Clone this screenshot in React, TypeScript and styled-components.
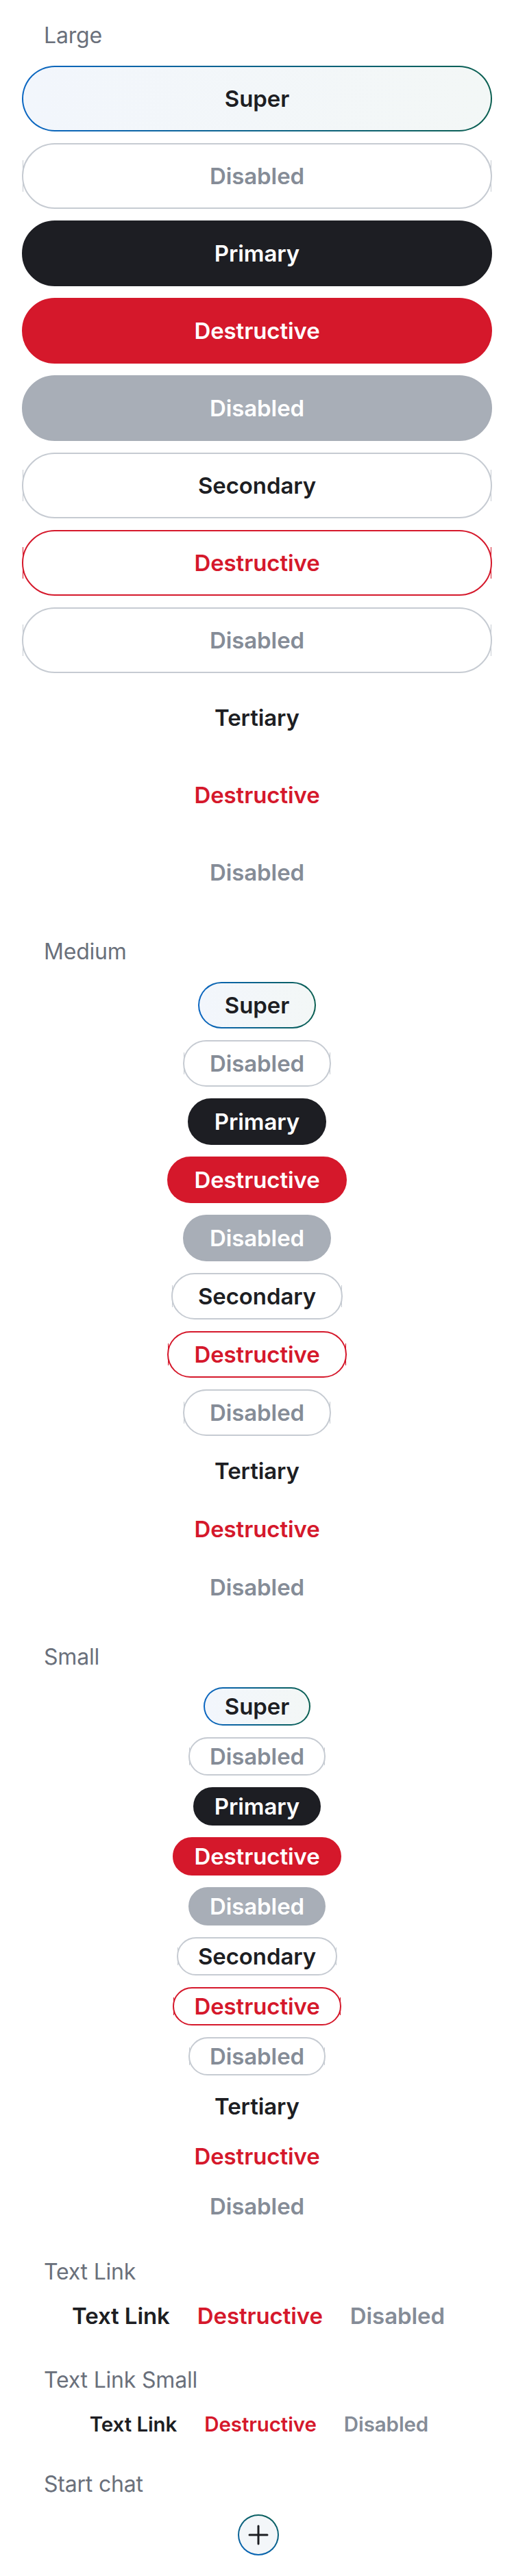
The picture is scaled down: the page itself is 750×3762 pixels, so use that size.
import React from "react";
import styled, { createGlobalStyle, css } from "styled-components";

const INK = "#1d1e23";
const RED = "#d5182b";
const GRAY_TEXT = "#858c97";
const DISABLED_BG = "#a8aeb7";
const BORDER_GRAY = "#c6cbd2";
const LABEL = "#6a707b";
const BLUE = "#0a66c2";
const TEAL = "#0b5f51";

const GlobalStyle = createGlobalStyle`
  html, body { margin: 0; padding: 0; background: #ffffff; }
  body {
    font-family: Inter, "Noto Sans", "Liberation Sans", sans-serif;
    -webkit-font-smoothing: antialiased;
  }
  * { box-sizing: border-box; }
`;

type Variant =
  | "super"
  | "outlineDisabled"
  | "primary"
  | "destructive"
  | "filledDisabled"
  | "secondary"
  | "destructiveOutline"
  | "tertiary"
  | "tertiaryDestructive"
  | "tertiaryDisabled";

type Size = "large" | "medium" | "small";

const Page = styled.main`
  display: flex;
  flex-direction: column;
  padding: 32px 32px 30px;
`;

const Section = styled.section<{ $space: number }>`
  display: flex;
  flex-direction: column;
  margin-top: ${(p) => p.$space}px;
`;

const SectionLabel = styled.h2`
  margin: 0 0 24px;
  padding-left: 32px;
  font-size: 32px;
  line-height: 40px;
  font-weight: 400;
  color: ${LABEL};
  letter-spacing: -0.2px;
`;

const Stack = styled.div<{ $size: Size }>`
  display: flex;
  flex-direction: column;
  align-items: ${(p) => (p.$size === "large" ? "stretch" : "center")};
  gap: 17px;
`;

const sizeStyles: Record<Size, ReturnType<typeof css>> = {
  large: css`
    height: 96px;
    padding: 0 30px;
  `,
  medium: css`
    height: 68px;
    padding: 0 37px;
  `,
  small: css`
    height: 56px;
    padding: 0 29px;
  `,
};

const edgeTicks = (color: string) => css`
  &::before,
  &::after {
    content: "";
    position: absolute;
    top: 25%;
    height: 50%;
    width: 1px;
    background: ${color};
  }
  &::before {
    left: -1px;
  }
  &::after {
    right: -1px;
  }
`;

const variantStyles: Record<Variant, ReturnType<typeof css>> = {
  super: css`
    color: ${INK};
    border: 2px solid transparent;
    background: linear-gradient(90deg, #f2f6fc, #f3f7f6) padding-box,
      linear-gradient(90deg, ${BLUE}, ${TEAL}) border-box;
  `,
  outlineDisabled: css`
    color: ${GRAY_TEXT};
    background: #ffffff;
    border: 2px solid ${BORDER_GRAY};
    ${edgeTicks(BORDER_GRAY)}
  `,
  primary: css`
    color: #ffffff;
    background: ${INK};
    border: 2px solid ${INK};
  `,
  destructive: css`
    color: #ffffff;
    background: ${RED};
    border: 2px solid ${RED};
  `,
  filledDisabled: css`
    color: #ffffff;
    background: ${DISABLED_BG};
    border: 2px solid ${DISABLED_BG};
  `,
  secondary: css`
    color: ${INK};
    background: #ffffff;
    border: 2px solid ${BORDER_GRAY};
    ${edgeTicks(BORDER_GRAY)}
  `,
  destructiveOutline: css`
    color: ${RED};
    background: #ffffff;
    border: 2px solid ${RED};
    ${edgeTicks(RED)}
  `,
  tertiary: css`
    color: ${INK};
    background: transparent;
    border: 2px solid transparent;
  `,
  tertiaryDestructive: css`
    color: ${RED};
    background: transparent;
    border: 2px solid transparent;
  `,
  tertiaryDisabled: css`
    color: ${GRAY_TEXT};
    background: transparent;
    border: 2px solid transparent;
  `,
};

const Button = styled.button<{ $variant: Variant; $size: Size }>`
  position: relative;
  display: flex;
  align-items: center;
  justify-content: center;
  border-radius: 999px;
  font-family: Inter, "Noto Sans", sans-serif;
  font-size: 33px;
  font-weight: 600;
  letter-spacing: -0.1px;
  cursor: pointer;
  ${(p) => sizeStyles[p.$size]}
  ${(p) => variantStyles[p.$variant]}
`;

const LinkRow = styled.div<{ $small?: boolean }>`
  display: flex;
  justify-content: center;
  align-items: center;
  gap: 40px;
  height: 40px;
  padding-left: ${(p) => (p.$small ? "6px" : "4px")};
`;

const TextLink = styled.a<{ $tone: "ink" | "red" | "gray"; $small?: boolean }>`
  font-size: ${(p) => (p.$small ? "29.5px" : "33px")};
  font-weight: 600;
  letter-spacing: -0.1px;
  text-decoration: none;
  cursor: pointer;
  color: ${(p) => (p.$tone === "ink" ? INK : p.$tone === "red" ? RED : GRAY_TEXT)};
`;

const ChatRow = styled.div`
  display: flex;
  justify-content: center;
  padding-left: 4px;
`;

const ChatButton = styled.button`
  width: 60px;
  height: 60px;
  border-radius: 50%;
  display: flex;
  align-items: center;
  justify-content: center;
  padding: 0;
  border: 2px solid transparent;
  background: linear-gradient(#f3f6f9, #f3f6f9) padding-box,
    linear-gradient(20deg, ${BLUE}, ${TEAL}) border-box;
  cursor: pointer;
`;

const ITEMS: { variant: Variant; text: string }[] = [
  { variant: "super", text: "Super" },
  { variant: "outlineDisabled", text: "Disabled" },
  { variant: "primary", text: "Primary" },
  { variant: "destructive", text: "Destructive" },
  { variant: "filledDisabled", text: "Disabled" },
  { variant: "secondary", text: "Secondary" },
  { variant: "destructiveOutline", text: "Destructive" },
  { variant: "outlineDisabled", text: "Disabled" },
  { variant: "tertiary", text: "Tertiary" },
  { variant: "tertiaryDestructive", text: "Destructive" },
  { variant: "tertiaryDisabled", text: "Disabled" },
];

const SIZES: { size: Size; label: string; space: number }[] = [
  { size: "large", label: "Large", space: 0 },
  { size: "medium", label: "Medium", space: 48 },
  { size: "small", label: "Small", space: 48 },
];

const PlusIcon = () => (
  <svg width="30" height="30" viewBox="0 0 30 30" aria-hidden="true">
    <path d="M15 2v26M2 15h26" stroke={INK} strokeWidth="3" strokeLinecap="round" fill="none" />
  </svg>
);

export default function App() {
  return (
    <>
      <GlobalStyle />
      <Page>
        {SIZES.map((s) => (
          <Section key={s.size} $space={s.space}>
            <SectionLabel>{s.label}</SectionLabel>
            <Stack $size={s.size}>
              {ITEMS.map((it, i) => (
                <Button key={i} $variant={it.variant} $size={s.size}>
                  {it.text}
                </Button>
              ))}
            </Stack>
          </Section>
        ))}
        <Section $space={48}>
          <SectionLabel>Text Link</SectionLabel>
          <LinkRow>
            <TextLink $tone="ink">Text Link</TextLink>
            <TextLink $tone="red">Destructive</TextLink>
            <TextLink $tone="gray">Disabled</TextLink>
          </LinkRow>
        </Section>
        <Section $space={54}>
          <SectionLabel>Text Link Small</SectionLabel>
          <LinkRow $small>
            <TextLink $tone="ink" $small>Text Link</TextLink>
            <TextLink $tone="red" $small>Destructive</TextLink>
            <TextLink $tone="gray" $small>Disabled</TextLink>
          </LinkRow>
        </Section>
        <Section $space={48}>
          <SectionLabel>Start chat</SectionLabel>
          <ChatRow>
            <ChatButton aria-label="Start chat">
              <PlusIcon />
            </ChatButton>
          </ChatRow>
        </Section>
      </Page>
    </>
  );
}
